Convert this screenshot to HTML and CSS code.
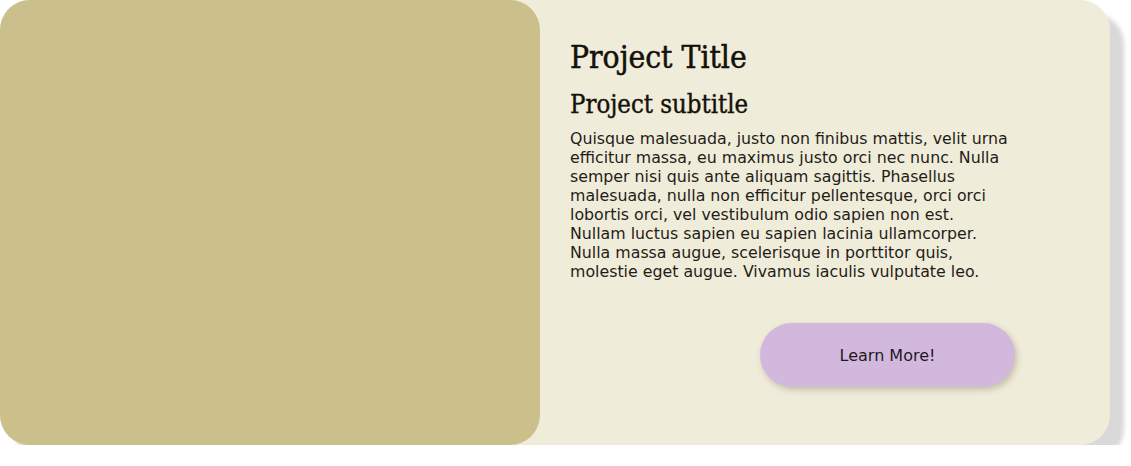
FILE: index.html
```html
<!DOCTYPE html>
<html lang="en">
<head>
<meta charset="utf-8">
<title>Project Card</title>
<link rel="stylesheet" href="styles.css">
</head>
<body>
<article class="card">
  <div class="card-image"></div>
  <div class="card-body">
    <h1 class="card-title">Project Title</h1>
    <h2 class="card-subtitle">Project subtitle</h2>
    <p class="card-text">Quisque malesuada, justo non finibus mattis, velit urna efficitur massa, eu maximus justo orci nec nunc. Nulla semper nisi quis ante aliquam sagittis. Phasellus malesuada, nulla non efficitur pellentesque, orci orci lobortis orci, vel vestibulum odio sapien non est. Nullam luctus sapien eu sapien lacinia ullamcorper. Nulla massa augue, scelerisque in porttitor quis, molestie eget augue. Vivamus iaculis vulputate leo.</p>
    <div class="card-actions">
      <button class="btn">Learn More!</button>
    </div>
  </div>
</article>
</body>
</html>
```
FILE: styles.css
```css
html, body {
  margin: 0;
  padding: 0;
  background: #ffffff;
}

.card {
  display: flex;
  width: 1110px;
  height: 445px;
  background: #f0ecda;
  border-radius: 30px;
  box-shadow: 14px 14px 4px #d9d9d9;
}

.card-image {
  width: 540px;
  flex: none;
  background: #cbbf8c;
  border-radius: 30px;
}

.card-body {
  flex: 1;
  display: flex;
  flex-direction: column;
  padding: 36px 30px 0 30px;
}

.card-title {
  margin: 0;
  font-family: "DejaVu Serif", serif;
  font-stretch: condensed;
  font-weight: normal;
  font-size: 31.5px;
  line-height: 42px;
  color: #14110a;
  -webkit-text-stroke: 0.5px #14110a;
}

.card-subtitle {
  margin: 6px 0 0 0;
  font-family: "DejaVu Serif", serif;
  font-stretch: condensed;
  font-weight: normal;
  font-size: 25.5px;
  line-height: 40px;
  color: #14110a;
  -webkit-text-stroke: 0.4px #14110a;
}

.card-text {
  margin: 5px 0 0 0;
  width: 443px;
  font-family: "DejaVu Sans", sans-serif;
  font-size: 15.8px;
  line-height: 19px;
  color: #1f1d18;
}

.card-actions {
  display: flex;
  padding-left: 190px;
  margin-top: 42px;
}

.btn {
  width: 255px;
  height: 64px;
  border: none;
  border-radius: 32px;
  background: #d3b8de;
  box-shadow: 2px 3px 6px rgba(120, 110, 80, 0.35);
  font-family: "DejaVu Sans", sans-serif;
  font-size: 16px;
  color: #1e1a1e;
}
```
